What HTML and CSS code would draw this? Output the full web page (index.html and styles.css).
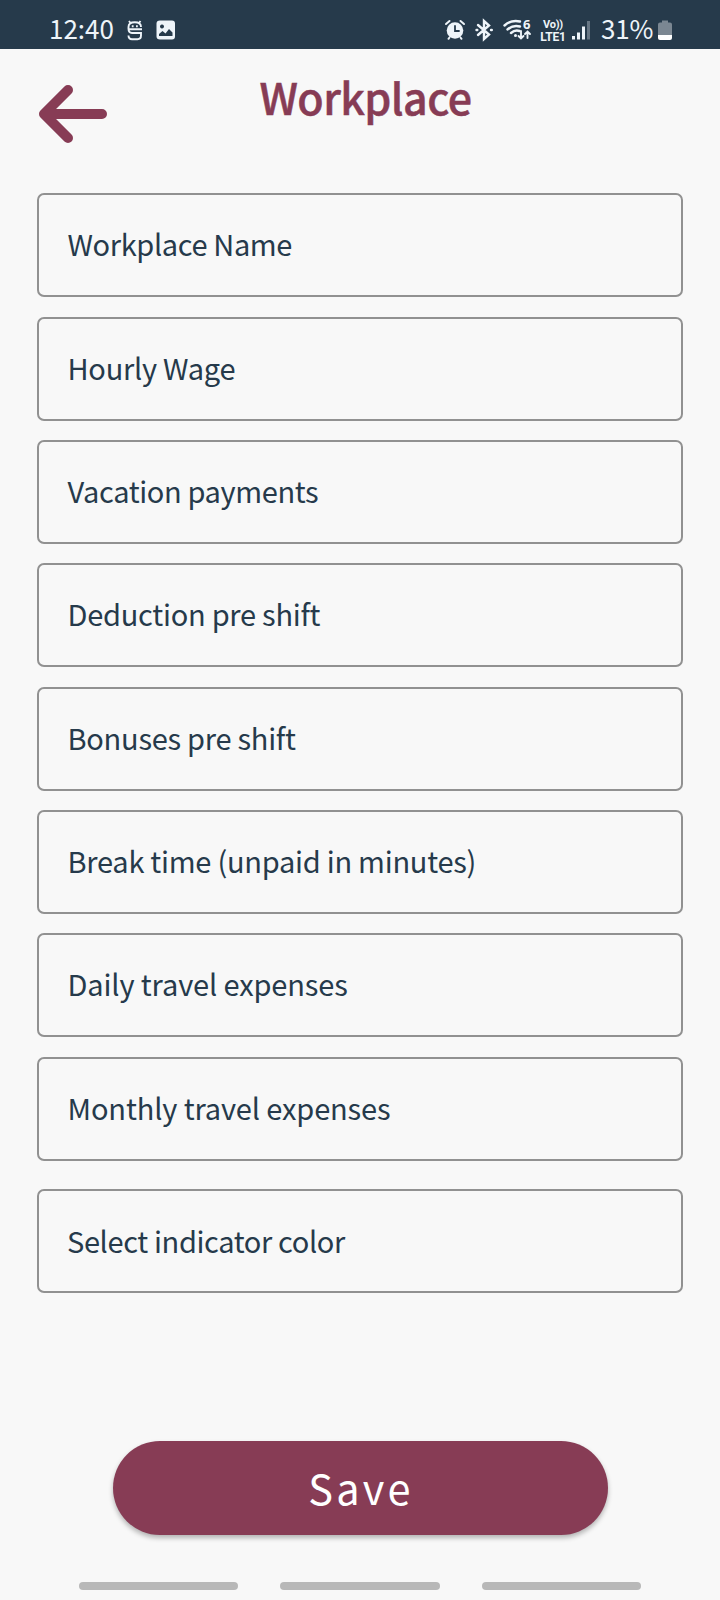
FILE: index.html
```
<!DOCTYPE html>
<html lang="en">
<head>
<meta charset="utf-8">
<title>Workplace</title>
<link rel="stylesheet" href="styles.css">
</head>
<body>
<div class="screen">
  <div class="status">
    <span class="clock">12:40</span>
    <svg class="notes" width="50" height="24" viewBox="0 0 50 24" fill="none" stroke="#eef4f9" stroke-width="1.9">
      <path d="M3 3L4.500 5M14.500 3L13 5M2.500 11.300V9Q2.500 4.300 8.800 4.300Q15 4.300 15 9M2 11.300H16M2.500 10.500Q2.500 15 6 15H15V17.500Q15 21.200 11.500 21.200H6Q2.500 21.200 2.500 17.500"/>
      <path d="M5.800 8.300h1.800M10 8.300h1.800"/>
      <path fill="#eef4f9" stroke="none" fill-rule="evenodd" d="M34 2.500H46Q49 2.500 49 5.500V18.500Q49 21.500 46 21.500H34Q30.500 21.500 30.500 18.500V5.500Q30.500 2.500 34 2.500ZM36 6.500a2 2 0 1 0 .01 0ZM33 18H46.500V14.500L43 11L39.500 15.500L36.500 13L33 16Z"/>
    </svg>
    <svg class="signals" width="92" height="24" viewBox="0 0 92 24" fill="none" stroke="#eef4f9" stroke-width="2" stroke-linecap="round">
      <circle cx="11" cy="12.500" r="8.300" fill="#eef4f9" stroke="none"/>
      <path d="M2 6L5.500 3M16.500 3L20 6M5.500 19.500L4.500 20.800M16.500 19.500L17.500 20.800"/>
      <path d="M11 8V13H15" stroke="#263a4b" stroke-width="1.800"/>
      <path d="M34 7L45 16.500L40 21V3L45 7.500L34 17M32.500 12h.8M47 12h.8" stroke-width="2.400"/>
      <path d="M60.500 7.500Q67 1.500 76 3.500M63.500 11.500Q69 6.500 76 8.500M67 15Q71 11.500 75.500 13" stroke-width="2.400"/>
      <path d="M71.500 17.500v.1" stroke-width="3"/>
      <path d="M77 13V20.500M74.500 18L77 20.500L79.500 18M83.500 20V13.500M81 16L83.500 13.500L86 16" stroke-width="1.900"/>
    </svg>
    <span class="six">6</span>
    <span class="lte"><span class="volte">Vo))</span><span>LTE1</span></span>
    <svg class="bars" width="20" height="24" viewBox="0 0 20 24">
      <path d="M0 18h3v3.500H0zM5 14.500h3v7H5zM10 8.500h3v13h-3z" fill="#eef4f9"/>
      <path d="M15 3h3v18.500h-3z" fill="#677684"/>
    </svg>
    <span class="percent">31%</span>
    <svg class="battery" width="14" height="24" viewBox="0 0 14 24">
      <path d="M4 2.500H10V4.500H12Q14 4.500 14 6.500V17H0V6.500Q0 4.500 2 4.500H4Z" fill="#7b8792"/>
      <path d="M0 17H14V20Q14 22 12 22H2Q0 22 0 20Z" fill="#fff"/>
    </svg>
  </div>
  <header class="header">
    <svg class="back" width="70" height="60" viewBox="0 0 70 60" fill="none" stroke="#873c55" stroke-width="10" stroke-linecap="round" stroke-linejoin="round">
      <path d="M30 6L6 30L30 54M8 30H64"/>
    </svg>
    <h1 class="title">Workplace</h1>
  </header>
  <main class="form">
    <div class="field"><span class="label tight">Workplace Name</span></div>
    <div class="field"><span class="label">Hourly Wage</span></div>
    <div class="field"><span class="label tight">Vacation payments</span></div>
    <div class="field"><span class="label">Deduction pre shift</span></div>
    <div class="field"><span class="label">Bonuses pre shift</span></div>
    <div class="field"><span class="label">Break time (unpaid in minutes)</span></div>
    <div class="field"><span class="label loose">Daily travel expenses</span></div>
    <div class="field"><span class="label loose">Monthly travel expenses</span></div>
    <div class="field field-color"><span class="label tight">Select indicator color</span></div>
  </main>
  <button class="save">Save</button>
  <div class="nav"><i></i><i></i><i></i></div>
</div>
</body>
</html>
```
FILE: styles.css
```
* { box-sizing: border-box; }
body {
  margin: 0;
  background: #f8f8f8;
  font-family: "Noto Sans CJK SC", "Noto Sans", sans-serif;
}
.screen {
  width: 720px;
  height: 1600px;
  display: flex;
  flex-direction: column;
  overflow: hidden;
}
.status {
  height: 48.500px;
  flex: none;
  background: #263a4b;
  color: #eef4f9;
  display: flex;
  align-items: flex-start;
  padding: 18px 0 0 49px;
  line-height: 24px;
  white-space: nowrap;
}
.status svg { flex: none; }
.clock { width: 77px; margin-top: -2px; font-size: 26px; }
.signals { margin-left: 268px; }
.six {
  width: 10px;
  margin: -5px 0 0 -13px;
  font: bold 13px/22px "Open Sans", sans-serif;
}
.lte {
  width: 30px;
  margin-left: 5px;
  display: flex;
  flex-direction: column;
  align-items: center;
  font: bold 12px/13px Roboto, sans-serif;
  letter-spacing: -0.200px;
}
.volte { font-size: 11px; letter-spacing: -0.200px; }
.bars { margin-left: 4px; }
.percent {
  width: 57px;
  margin: -2px 0 0 9px;
  font-size: 26px;
  letter-spacing: -0.200px;
}
.header {
  height: 144.950px;
  flex: none;
  display: flex;
  align-items: flex-start;
  padding-left: 38px;
}
.back { margin-top: 35px; }
.title {
  margin: 15px 0 0 151.500px;
  font-size: 43px;
  line-height: 64px;
  font-weight: 500;
  letter-spacing: -0.600px;
  color: #873c55;
  -webkit-text-stroke: 0.500px #873c55;
}
.form {
  display: flex;
  flex-direction: column;
  gap: 19.330px;
  padding: 0 37.500px 0 37px;
}
.field {
  height: 104px;
  border: 2px solid #919191;
  border-radius: 7px;
  display: flex;
  align-items: center;
  padding: 0 0 4px 28.500px;
}
.field-color { margin-top: 9px; padding: 0 0 3px 28px; }
.label {
  color: #263a4b;
  font-size: 29px;
  line-height: 40px;
  letter-spacing: -0.260px;
  white-space: nowrap;
}
.tight { letter-spacing: -0.370px; }
.loose { letter-spacing: -0.130px; }
.save {
  width: 495px;
  height: 94px;
  flex: none;
  margin: 147.600px 0 0 112.500px;
  padding: 0 0 2px 2px;
  border: 0;
  border-radius: 47px;
  background: #873c55;
  color: #fff;
  font: 41.500px/60px "Noto Sans CJK SC", sans-serif;
  letter-spacing: 3.200px;
  box-shadow: 0 3px 5px rgba(0, 0, 0, 0.28);
}
.nav {
  display: flex;
  gap: 42px;
  margin: 47.500px 0 0 79px;
}
.nav i {
  width: 159.300px;
  height: 8px;
  border-radius: 4px;
  background: #b8b8b8;
}
```
